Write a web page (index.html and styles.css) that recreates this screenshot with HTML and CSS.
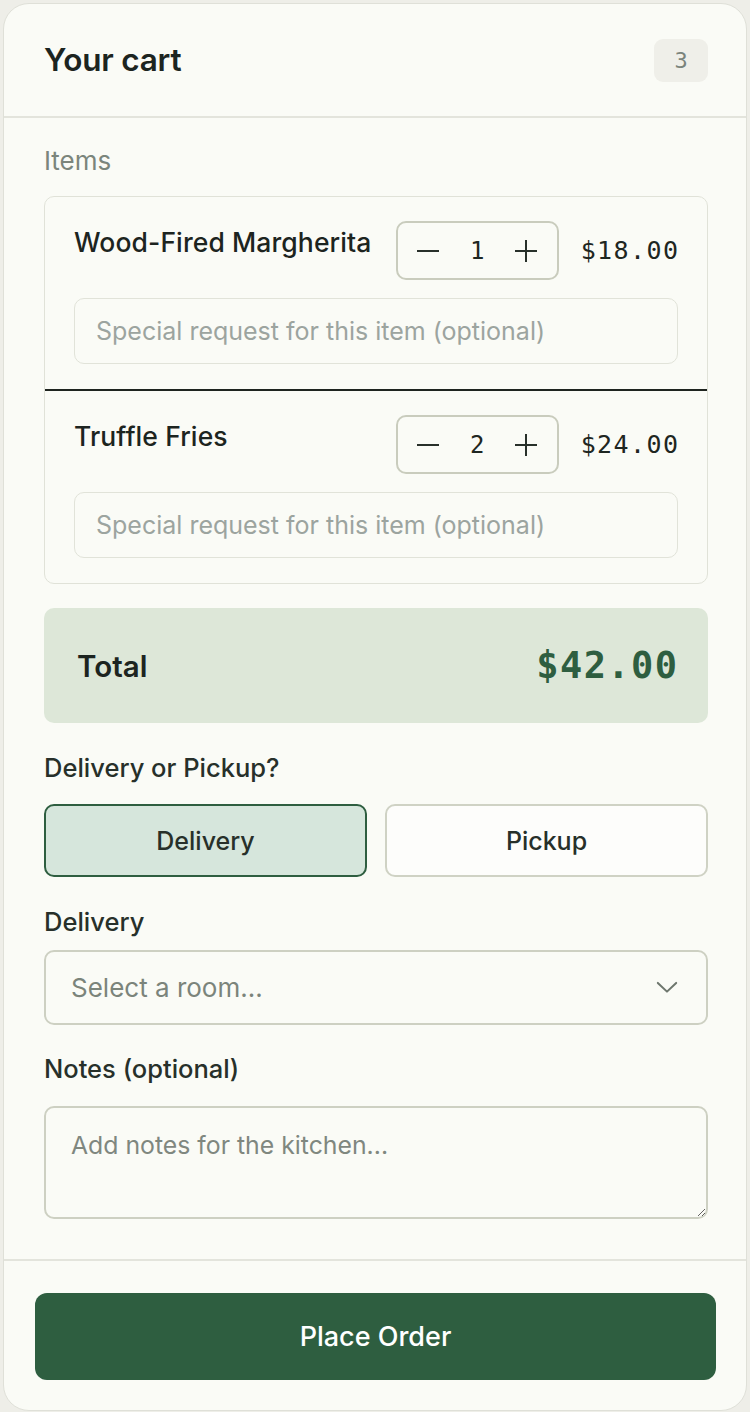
FILE: index.html
```html
<!DOCTYPE html>
<html lang="en">
<head>
<meta charset="utf-8">
<title>Your cart</title>
<link rel="stylesheet" href="styles.css">
</head>
<body>
<div class="card">
  <header class="card-head">
    <h1 class="title">Your cart</h1>
    <span class="badge">3</span>
  </header>
  <main class="card-body">
    <div class="section-label">Items</div>
    <div class="items">
      <div class="item">
        <div class="item-row">
          <div class="item-name">Wood-Fired Margherita</div>
          <div class="stepper">
            <span class="step"><svg width="22" height="22" viewBox="0 0 22 22"><path d="M0 11 H22" stroke="#28302a" stroke-width="2"/></svg></span>
            <span class="qty">1</span>
            <span class="step"><svg width="22" height="22" viewBox="0 0 22 22"><path d="M0 11 H22 M11 0 V22" stroke="#28302a" stroke-width="2"/></svg></span>
          </div>
          <div class="price">$18.00</div>
        </div>
        <input class="req" type="text" placeholder="Special request for this item (optional)">
      </div>
      <div class="item item-sep">
        <div class="item-row">
          <div class="item-name">Truffle Fries</div>
          <div class="stepper">
            <span class="step"><svg width="22" height="22" viewBox="0 0 22 22"><path d="M0 11 H22" stroke="#28302a" stroke-width="2"/></svg></span>
            <span class="qty">2</span>
            <span class="step"><svg width="22" height="22" viewBox="0 0 22 22"><path d="M0 11 H22 M11 0 V22" stroke="#28302a" stroke-width="2"/></svg></span>
          </div>
          <div class="price">$24.00</div>
        </div>
        <input class="req" type="text" placeholder="Special request for this item (optional)">
      </div>
    </div>
    <div class="total">
      <span class="total-label">Total</span>
      <span class="total-value">$42.00</span>
    </div>
    <div class="field-label mode-label">Delivery or Pickup?</div>
    <div class="toggle">
      <button class="opt opt-on" type="button">Delivery</button>
      <button class="opt" type="button">Pickup</button>
    </div>
    <div class="field-label room-label">Delivery</div>
    <div class="select">
      <span class="select-ph">Select a room...</span>
      <svg class="chev" width="24" height="14" viewBox="0 0 24 14"><path d="M2 2 L12 11.5 L22 2" fill="none" stroke="#6d766d" stroke-width="2.2" stroke-linecap="round" stroke-linejoin="round"/></svg>
    </div>
    <div class="field-label notes-label">Notes (optional)</div>
    <textarea class="notes" placeholder="Add notes for the kitchen..."></textarea>
  </main>
  <footer class="card-foot">
    <button class="place" type="button">Place Order</button>
  </footer>
</div>
</body>
</html>
```

FILE: styles.css
```css
* { box-sizing: border-box; }

html, body {
  margin: 0;
  padding: 0;
  background: #eeeee8;
}

body {
  padding: 3px 3px 0 3px;
  font-family: Inter, "Noto Sans", "Liberation Sans", sans-serif;
  color: #1c2420;
}

.card {
  background: #fafbf6;
  border: 1.5px solid #dfe0d8;
  border-radius: 26px;
  height: 1408px;
  display: flex;
  flex-direction: column;
  overflow: hidden;
}

.card-head {
  display: flex;
  align-items: center;
  justify-content: space-between;
  padding: 34px 38px 34px 40px;
  border-bottom: 2px solid #e3e4dc;
}

.title {
  margin: 0;
  font-size: 31.5px;
  font-weight: 600;
  letter-spacing: -0.2px;
  line-height: 44px;
}

.badge {
  width: 54px;
  height: 43px;
  border-radius: 9px;
  background: #efefe9;
  color: #7b847c;
  font-family: "DejaVu Sans Mono", "Liberation Mono", monospace;
  font-size: 22px;
  display: flex;
  align-items: center;
  justify-content: center;
}

.card-body {
  padding: 28px 38px 38px 40px;
  display: flex;
  flex-direction: column;
  flex: 1;
}

.section-label {
  font-size: 26px;
  color: #7b857c;
  line-height: 30px;
  margin-bottom: 20px;
}

.items {
  border: 1.5px solid #e0e2d8;
  border-radius: 10px;
  display: flex;
  flex-direction: column;
}

.item {
  padding: 24px 29px 25px 29px;
  display: flex;
  flex-direction: column;
  gap: 18px;
}

.item-sep {
  border-top: 2px solid #1e241f;
}

.item-row {
  display: flex;
  align-items: center;
  gap: 22px;
}

.item-name {
  flex: 1;
  align-self: flex-start;
  font-size: 26.5px;
  font-weight: 500;
  line-height: 30px;
  padding-top: 6px;
  letter-spacing: 0.1px;
  white-space: nowrap;
}

.stepper {
  width: 163px;
  height: 59px;
  border: 2px solid #c9ccbd;
  border-radius: 10px;
  display: grid;
  grid-template-columns: 1fr 1fr 1fr;
  align-items: center;
  padding: 0 6px;
  font-family: "DejaVu Sans Mono", "Liberation Mono", monospace;
  color: #1e2621;
}

.step {
  display: flex;
  justify-content: center;
  align-items: center;
}

.step svg { display: block; }

.qty {
  font-size: 24px;
  text-align: center;
}

.price {
  font-family: "DejaVu Sans Mono", "Liberation Mono", monospace;
  font-size: 25px;
  letter-spacing: 1.4px;
  margin-right: -1.4px;
  color: #1e2621;
}

.req {
  height: 66px;
  width: 100%;
  border: 1.5px solid #e1e3d9;
  border-radius: 10px;
  background: #fafbf6;
  padding: 0 21px;
  font-family: Inter, "Noto Sans", sans-serif;
  font-size: 25px;
  color: #1c2420;
  outline: none;
}

.req::placeholder {
  color: #9ca49f;
}

.total {
  margin-top: 24px;
  height: 115px;
  background: #dde7d8;
  border-radius: 10px;
  display: flex;
  align-items: center;
  justify-content: space-between;
  padding: 0 31px 0 33px;
}

.total-label {
  font-size: 29.5px;
  font-weight: 600;
}

.total-value {
  font-family: "DejaVu Sans Mono", "Liberation Mono", monospace;
  font-size: 37px;
  font-weight: 700;
  letter-spacing: 1.4px;
  margin-right: -1.4px;
  color: #2e5e40;
}

.field-label {
  font-size: 25.5px;
  font-weight: 500;
  line-height: 30px;
  color: #27302a;
}

.mode-label { margin-top: 30px; margin-bottom: 21px; }
.room-label { margin-top: 30px; margin-bottom: 13px; }
.notes-label { margin-top: 29px; margin-bottom: 22px; }

.toggle {
  display: grid;
  grid-template-columns: 1fr 1fr;
  gap: 18px;
}

.opt {
  height: 73px;
  border: 2px solid #cfd2c4;
  border-radius: 10px;
  background: #fdfdfb;
  font-family: Inter, "Noto Sans", sans-serif;
  font-size: 25px;
  font-weight: 500;
  color: #27302a;
}

.opt-on {
  background: #d6e6dc;
  border-color: #2e5e40;
}

.select {
  height: 75px;
  border: 2px solid #cdd0c2;
  border-radius: 10px;
  display: flex;
  align-items: center;
  justify-content: space-between;
  padding: 0 28px 0 25px;
}

.select-ph {
  font-size: 26px;
  color: #7b847b;
}

.chev { width: 22px; height: 13px; }

.notes {
  height: 113px;
  border: 2px solid #cdd0c2;
  border-radius: 10px;
  background: #fafbf6;
  padding: 22px 25px;
  font-family: Inter, "Noto Sans", sans-serif;
  font-size: 24.8px;
  color: #1c2420;
  outline: none;
  resize: vertical;
}

.notes::placeholder {
  color: #7f877f;
}

.card-foot {
  border-top: 2px solid #e3e4dc;
  padding: 32px 30px 0 31px;
  height: 151px;
}

.place {
  width: 100%;
  height: 87px;
  border: none;
  border-radius: 12px;
  background: #2e5e40;
  color: #ffffff;
  font-family: Inter, "Noto Sans", sans-serif;
  font-size: 27px;
  font-weight: 500;
}
```
